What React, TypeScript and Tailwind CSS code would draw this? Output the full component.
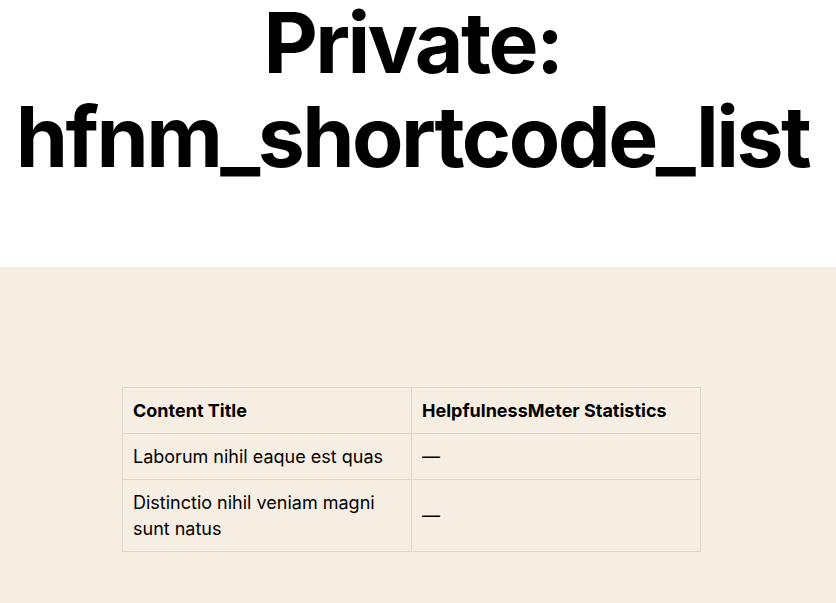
const rows = [
  { title: "Laborum nihil eaque est quas", stat: "—" },
  { title: "Distinctio nihil veniam magni sunt natus", stat: "—" },
];

export default function App() {
  return (
    <div className="min-h-[603px] bg-white font-['Inter',sans-serif] text-black">
      <header className="flow-root h-[267px] bg-white pr-[11px]">
        <h1 className="-mt-[4px] text-center text-[84px] font-bold leading-[94px] tracking-[-0.03em]">
          Private:
          <br />
          hfnm_shortcode_list
        </h1>
      </header>
      <main className="min-h-[336px] bg-[#f6eee3] pt-[120px] pb-16">
        <table className="ml-[122px] w-[579px] table-fixed border-collapse text-[18px] leading-[26px]">
          <thead>
            <tr>
              <th className="border border-[#ddd6cb] px-[10px] py-[9.5px] text-left font-bold">
                Content Title
              </th>
              <th className="border border-[#ddd6cb] px-[10px] py-[9.5px] text-left font-bold">
                HelpfulnessMeter Statistics
              </th>
            </tr>
          </thead>
          <tbody>
            {rows.map((r) => (
              <tr key={r.title}>
                <td className="border border-[#ddd6cb] px-[10px] py-[9.5px]">{r.title}</td>
                <td className="border border-[#ddd6cb] px-[10px] py-[9.5px]">{r.stat}</td>
              </tr>
            ))}
          </tbody>
        </table>
      </main>
    </div>
  );
}
